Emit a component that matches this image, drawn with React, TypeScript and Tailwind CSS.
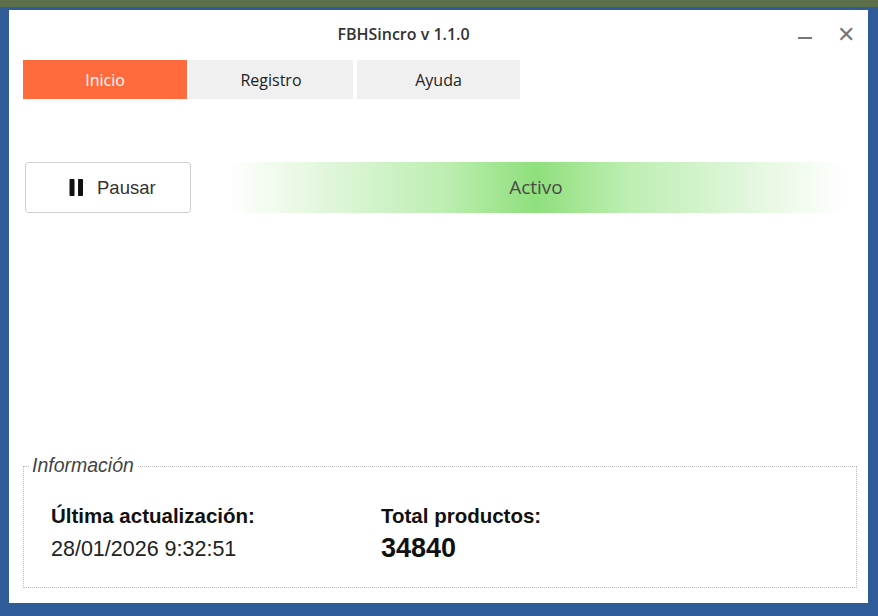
export default function App() {
  return (
    <div className="w-[878px] h-[616px] bg-[#2f5b98] relative overflow-hidden font-['Open_Sans',sans-serif]">
      <div className="h-[7px] bg-[#5b6f4a]" />
      <div className="ml-[9px] mr-[10px] mt-[3px] h-[593px] bg-white flex flex-col">
        {/* title bar */}
        <div className="h-[45px] flex items-center relative">
          <div className="w-[789px] text-center text-[16px] font-semibold text-[#333] pt-[2px]">FBHSincro v 1.1.0</div>
          <div className="absolute right-[56px] top-[27px] w-[14px] h-[2px] bg-[#777]" />
          <div className="absolute right-[13px] top-[12px] text-[22px] leading-none text-[#777] font-light">✕</div>
        </div>

        {/* tabs */}
        <div className="mt-[5px] ml-[14px] flex gap-[2px] h-[39px] text-[16px]">
          <div className="w-[164px] bg-[#ff6b3d] text-white flex items-center justify-center">Inicio</div>
          <div className="w-[164px] bg-[#f0f0f0] text-[#222] flex items-center justify-center">Registro</div>
          <div className="w-[163px] ml-[2px] bg-[#f0f0f0] text-[#222] flex items-center justify-center">Ayuda</div>
        </div>

        {/* controls */}
        <div className="mt-[63px] ml-[16px] mr-[22px] flex items-center gap-[35px]">
          <button className="w-[166px] h-[51px] border border-[#cfcfcf] rounded-[4px] bg-white flex items-center pl-[43px] gap-[13px] text-[18.5px] text-[#333] font-['Liberation_Sans',sans-serif]">
            <svg width="15" height="17" viewBox="0 0 15 17">
              <rect x="0.5" y="0" width="5" height="17" rx="0.8" fill="#111" />
              <rect x="9" y="0" width="5" height="17" rx="0.8" fill="#111" />
            </svg>
            <span>Pausar</span>
          </button>
          <div className="flex-1 h-[51px] flex items-center justify-center text-[19px] text-[#4a4a4a] bg-[linear-gradient(to_right,#ffffff_0%,#e3f7de_15%,#bdeeb2_35%,#8fdf7c_50%,#bdeeb2_65%,#e3f7de_85%,#ffffff_100%)]">
            Activo
          </div>
        </div>

        <div className="flex-1" />

        {/* info groupbox */}
        <div className="relative ml-[14px] mr-[11px] mb-[15px] h-[122px] border border-dotted border-[#bdbdbd] font-['Liberation_Sans',sans-serif]">
          <div className="absolute -top-[13px] left-[5px] bg-white px-[3px] text-[19.5px] leading-[22px] italic text-[#444]">Información</div>
          <div className="flex pt-[37px] pl-[27px]">
            <div className="w-[330px]">
              <div className="text-[20.5px] font-bold text-[#111] leading-[23px]">Última actualización:</div>
              <div className="mt-[10px] text-[21.5px] text-[#222] leading-[25px]">28/01/2026 9:32:51</div>
            </div>
            <div>
              <div className="text-[20.5px] font-bold text-[#111] leading-[23px]">Total productos:</div>
              <div className="mt-[6px] text-[27px] font-bold text-[#111] leading-[30px]">34840</div>
            </div>
          </div>
        </div>
      </div>
    </div>
  )
}
